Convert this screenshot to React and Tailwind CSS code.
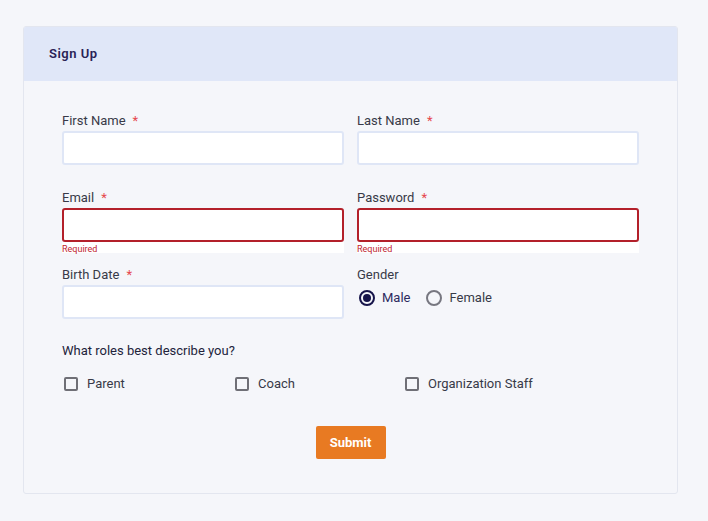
import React from 'react';

const Field = ({ label, error }) => (
  <div className="flex flex-col">
    <label className="h-4 text-[13px] leading-[18px] text-[#383a48] mb-[3px]">
      {label}
      <span className="ml-[7px] text-[#e5484d]">*</span>
    </label>
    <input
      className={`h-[34px] w-full bg-white rounded-[3px] border-2 outline-none ${
        error ? 'border-[#b3202a]' : 'border-[#dfe6f6]'
      }`}
    />
    <div className="h-6">
      {error && (
        <div className="h-[11px] bg-white text-[9px] leading-[15px] text-[#c0242f]">Required</div>
      )}
    </div>
  </div>
);

const Radio = ({ label, checked }) => (
  <label className="flex items-center gap-[7px]">
    <span
      className={`w-4 h-4 rounded-full border-2 flex items-center justify-center ${
        checked ? 'border-[#16144a]' : 'border-[#777780]'
      }`}
    >
      {checked && <span className="w-2 h-2 rounded-full bg-[#16144a]" />}
    </span>
    <span className={`text-[13px] ${checked ? 'text-[#2d2b60]' : 'text-[#383a48]'}`}>{label}</span>
  </label>
);

const Check = ({ label }) => (
  <label className="flex items-center gap-[9px] pl-[2px]">
    <span className="w-[14px] h-[14px] rounded-[2px] border-2 border-[#6f6f76]" />
    <span className="text-[13px] text-[#383a48]">{label}</span>
  </label>
);

export default function App() {
  return (
    <div
      className="min-h-screen bg-[#f5f6fa] px-[23px] pt-[26px] pb-[28px]"
      style={{ fontFamily: 'Roboto, "Liberation Sans", sans-serif' }}
    >
      <div className="w-[655px] border border-[#e3e6ef] rounded-[3px] overflow-hidden bg-[#f5f6fa]">
        {/* Header */}
        <div className="h-[54px] bg-[#e0e7f8] flex items-center px-[25px]">
          <h2 className="text-[13px] font-semibold tracking-[0.5px] text-[#2a2356]">Sign Up</h2>
        </div>

        {/* Body */}
        <div className="px-[38px] pt-[31px] pb-[34px]">
          <div className="grid grid-cols-2 gap-x-[13px]">
            <Field label="First Name" />
            <Field label="Last Name" />
            <Field label="Email" error />
            <Field label="Password" error />
            <Field label="Birth Date" />
            <div className="flex flex-col">
              <div className="h-4 text-[13px] leading-[18px] text-[#383a48] mb-[6px]">Gender</div>
              <div className="flex items-center gap-[16px] pl-[2px]">
                <Radio label="Male" checked />
                <Radio label="Female" />
              </div>
            </div>
          </div>

          <div className="text-[13px] leading-4 text-[#22233a]">What roles best describe you?</div>
          <div className="grid grid-cols-[171px_170px_1fr] h-6 items-center mt-[13px]">
            <Check label="Parent" />
            <Check label="Coach" />
            <Check label="Organization Staff" />
          </div>

          <div className="flex justify-center mt-[30px]">
            <button className="w-[70px] h-[33px] bg-[#e87a22] text-white text-[13px] font-bold rounded-[2px]">
              Submit
            </button>
          </div>
        </div>
      </div>
    </div>
  );
}
